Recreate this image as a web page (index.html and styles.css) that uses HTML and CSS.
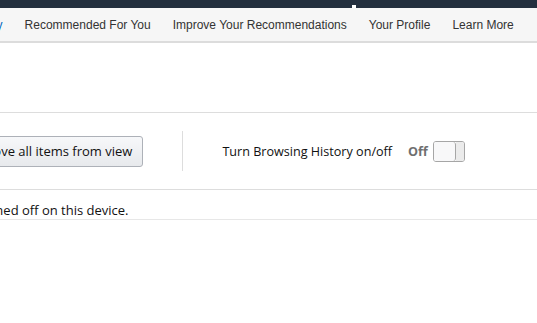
FILE: index.html
```html
<!DOCTYPE html>
<html>

<head>
    <meta charset="utf-8">
    <title>Your Browsing History</title>

    <link rel="stylesheet" href="styles.css">
</head>

<body>

    <div class="topbar">
        <span class="mark"></span>
    </div>

    <div class="nav">
        <a class="nav-item active">Your Browsing History</a>
        <a class="nav-item">Recommended For You</a>
        <a class="nav-item">Improve Your Recommendations</a>
        <a class="nav-item">Your Profile</a>
        <a class="nav-item">Learn More</a>
    </div>

    <div class="content">
        <div class="spacer"></div>

        <div class="controls">
            <button type="button" class="btn-remove">Remove all items from view</button>
            <div class="divider"></div>
            <span class="label">Turn Browsing History on/off</span>
            <span class="state">Off</span>
            <span class="toggle">
                <span class="toggle-knob"></span>
                <span class="toggle-track"></span>
            </span>
        </div>

        <p class="notice">Browsing history is turned off on this device.</p>
    </div>

</body>

</html>
```

FILE: styles.css
```css
body {
    margin: 0;
    overflow: hidden;
    background: #fff;
    font-family: "Open Sans", "Noto Sans", sans-serif;
    color: #111;
}

.topbar {
    height: 8px;
    background: #232f3e;
    position: relative;
}

.mark {
    position: absolute;
    left: 352px;
    top: 5px;
    width: 4px;
    height: 3px;
    background: #fff;
}

.nav {
    display: flex;
    box-sizing: border-box;
    height: 35px;
    padding-top: 1px;
    align-items: center;
    gap: 22px;
    background: #f6f6f6;
    border-bottom: 2px solid #dcdcdc;
    font-family: "Liberation Sans", Arial, sans-serif;
    font-size: 12px;
    margin-left: -115px;
}

.nav-item {
    color: #333;
    white-space: nowrap;
}

.nav-item.active {
    color: #0066c0;
}

.spacer {
    height: 69px;
    border-bottom: 1px solid #ddd;
}

.controls {
    display: flex;
    align-items: center;
    height: 40px;
    padding: 18px 0;
    border-bottom: 1px solid #ddd;
    margin-left: -45px;
}

.btn-remove {
    font-family: "Open Sans", "Noto Sans", sans-serif;
    font-size: 13px;
    color: #111;
    height: 31px;
    padding: 0 10px;
    background: linear-gradient(#f7f8fa, #e7e9ec);
    border: 1px solid #adb1b8;
    border-radius: 3px;
}

.divider {
    width: 1px;
    height: 40px;
    background: #ddd;
    margin: 0 39px;
}

.label {
    font-size: 12.6px;
    color: #111;
}

.state {
    font-size: 12.6px;
    font-weight: bold;
    color: #6f6f6f;
    margin-left: 16px;
}

.toggle {
    display: flex;
    width: 30px;
    height: 19px;
    margin-left: 5px;
    border: 1px solid #a6a6a6;
    border-radius: 3px;
    overflow: hidden;
}

.toggle-knob {
    width: 21px;
    background: #f8f8f9;
    border-right: 1px solid #a6a6a6;
    border-radius: 0 3px 3px 0;
}

.toggle-track {
    flex: 1;
    background: #ebebeb;
}

.notice {
    margin: 0 0 0 -140px;
    padding: 11px 0 0;
    line-height: 18px;
    font-size: 13px;
    border-bottom: 1px solid #e7e7e7;
}
```
